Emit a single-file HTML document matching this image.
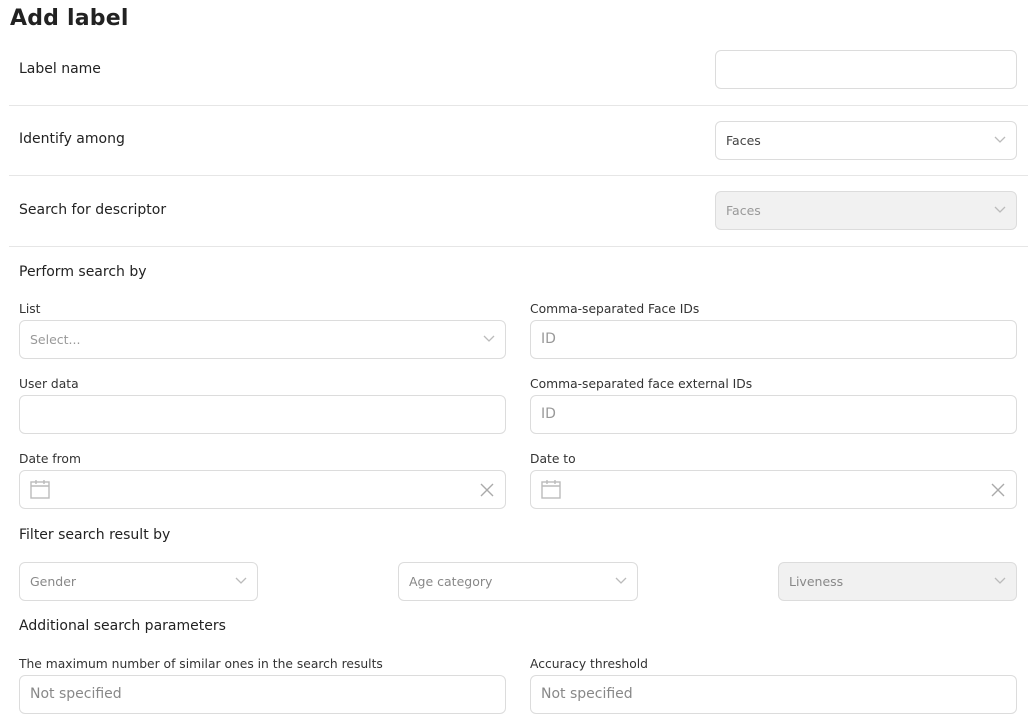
<!DOCTYPE html>
<html><head><style>
*{box-sizing:border-box;margin:0;padding:0}
body{width:1028px;height:726px;background:#fff;font-family:"DejaVu Sans","Liberation Sans",sans-serif;color:#222;position:relative;overflow:hidden}
.a{position:absolute}
h1{position:absolute;left:10px;top:6px;font-size:22px;font-weight:600;letter-spacing:0.2px}
.lb{position:absolute;font-size:14px;color:#222}
.sl{position:absolute;font-size:12.3px;color:#333}
.in{position:absolute;height:39px;border:1px solid #dcdcdc;border-radius:6px;background:#fff}
.dis{background:#f1f1f1}
.ph{position:absolute;left:10px;top:11px;font-size:12.5px;color:#999}
.ph2{position:absolute;left:10px;top:10px;font-size:14px;color:#999}
.hr{position:absolute;left:9px;width:1019px;height:1px;background:#e6e6e6}
.chev{position:absolute;right:10px;top:14px}
.x{position:absolute;right:11px;top:12px}
.cal{position:absolute;left:10px;top:8px}
</style></head><body>
<h1>Add label</h1>
<div class="lb" style="left:19px;top:61px">Label name</div>
<div class="in" style="left:715px;top:50px;width:302px"></div>
<div class="hr" style="top:105px"></div>
<div class="lb" style="left:19px;top:131px">Identify among</div>
<div class="in" style="left:715px;top:121px;width:302px"><span class="ph" style="color:#444">Faces</span><svg class="chev" width="12" height="8" viewBox="0 0 12 8"><path d="M1 1l5 5 5-5" fill="none" stroke="#bbb" stroke-width="1.3"/></svg></div>
<div class="hr" style="top:175px"></div>
<div class="lb" style="left:19px;top:202px">Search for descriptor</div>
<div class="in dis" style="left:715px;top:191px;width:302px"><span class="ph" style="color:#999">Faces</span><svg class="chev" width="12" height="8" viewBox="0 0 12 8"><path d="M1 1l5 5 5-5" fill="none" stroke="#bbb" stroke-width="1.3"/></svg></div>
<div class="hr" style="top:246px"></div>
<div class="lb" style="left:19px;top:264px">Perform search by</div>

<div class="sl" style="left:19px;top:302px">List</div>
<div class="in" style="left:19px;top:320px;width:487px"><span class="ph">Select...</span><svg class="chev" width="12" height="8" viewBox="0 0 12 8"><path d="M1 1l5 5 5-5" fill="none" stroke="#bbb" stroke-width="1.3"/></svg></div>
<div class="sl" style="left:530px;top:302px">Comma-separated Face IDs</div>
<div class="in" style="left:530px;top:320px;width:487px"><span class="ph2">ID</span></div>

<div class="sl" style="left:19px;top:377px">User data</div>
<div class="in" style="left:19px;top:395px;width:487px"></div>
<div class="sl" style="left:530px;top:377px">Comma-separated face external IDs</div>
<div class="in" style="left:530px;top:395px;width:487px"><span class="ph2">ID</span></div>

<div class="sl" style="left:19px;top:452px">Date from</div>
<div class="in" style="left:19px;top:470px;width:487px"><svg class="cal" width="20" height="21" viewBox="0 0 20 21"><rect x="1" y="3" width="18" height="16" fill="none" stroke="#bbb" stroke-width="1.4"/><path d="M1 7h18M6 1v4M14 1v4" stroke="#bbb" stroke-width="1.4"/></svg><svg class="x" width="14" height="14" viewBox="0 0 14 14"><path d="M1 1l12 12M13 1L1 13" stroke="#aaa" stroke-width="1.4"/></svg></div>
<div class="sl" style="left:530px;top:452px">Date to</div>
<div class="in" style="left:530px;top:470px;width:487px"><svg class="cal" width="20" height="21" viewBox="0 0 20 21"><rect x="1" y="3" width="18" height="16" fill="none" stroke="#bbb" stroke-width="1.4"/><path d="M1 7h18M6 1v4M14 1v4" stroke="#bbb" stroke-width="1.4"/></svg><svg class="x" width="14" height="14" viewBox="0 0 14 14"><path d="M1 1l12 12M13 1L1 13" stroke="#aaa" stroke-width="1.4"/></svg></div>

<div class="lb" style="left:19px;top:527px">Filter search result by</div>
<div class="in" style="left:19px;top:562px;width:239px"><span class="ph" style="color:#888">Gender</span><svg class="chev" width="12" height="8" viewBox="0 0 12 8"><path d="M1 1l5 5 5-5" fill="none" stroke="#bbb" stroke-width="1.3"/></svg></div>
<div class="in" style="left:398px;top:562px;width:240px"><span class="ph" style="color:#888">Age category</span><svg class="chev" width="12" height="8" viewBox="0 0 12 8"><path d="M1 1l5 5 5-5" fill="none" stroke="#bbb" stroke-width="1.3"/></svg></div>
<div class="in dis" style="left:778px;top:562px;width:239px"><span class="ph" style="color:#888">Liveness</span><svg class="chev" width="12" height="8" viewBox="0 0 12 8"><path d="M1 1l5 5 5-5" fill="none" stroke="#bbb" stroke-width="1.3"/></svg></div>

<div class="lb" style="left:19px;top:618px">Additional search parameters</div>
<div class="sl" style="left:19px;top:657px">The maximum number of similar ones in the search results</div>
<div class="in" style="left:19px;top:675px;width:487px"><span class="ph2" style="color:#888">Not specified</span></div>
<div class="sl" style="left:530px;top:657px">Accuracy threshold</div>
<div class="in" style="left:530px;top:675px;width:487px"><span class="ph2" style="color:#888">Not specified</span></div>
</body></html>
